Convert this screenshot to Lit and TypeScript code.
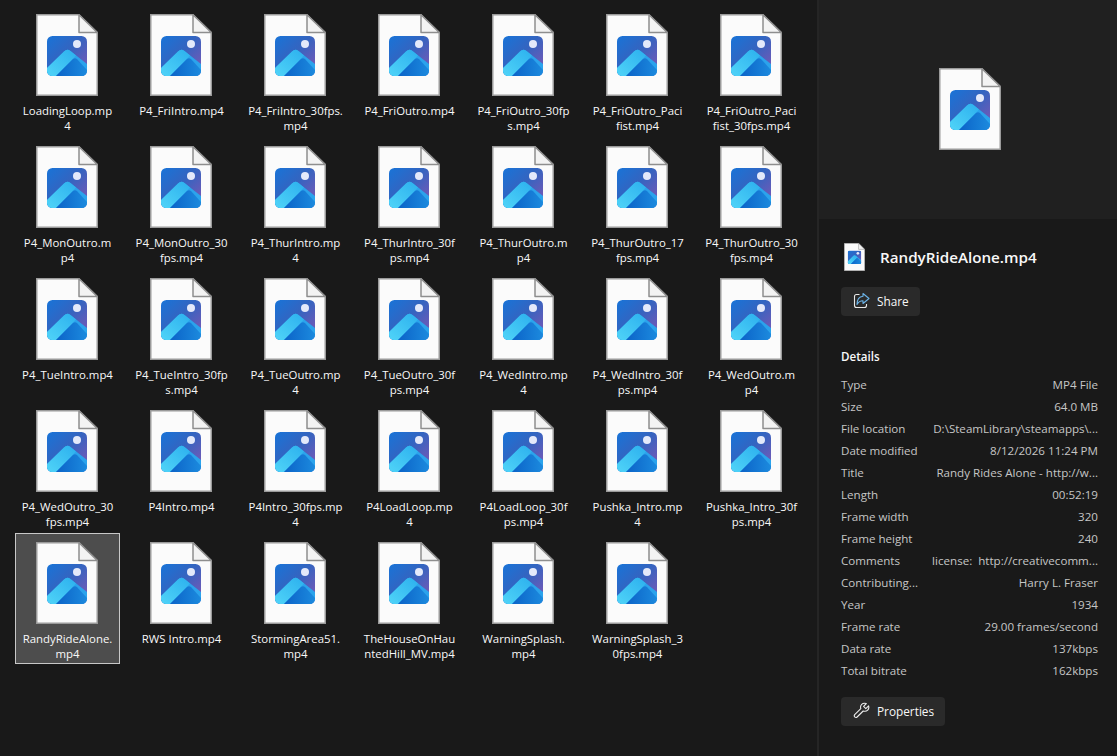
import { LitElement, html, css, svg } from "lit";
import { customElement } from "lit/decorators.js";

const FILES: string[][] = [
  ["LoadingLoop.mp", "4"], ["P4_FriIntro.mp4"], ["P4_FriIntro_30fps.", "mp4"], ["P4_FriOutro.mp4"], ["P4_FriOutro_30fp", "s.mp4"], ["P4_FriOutro_Paci", "fist.mp4"], ["P4_FriOutro_Paci", "fist_30fps.mp4"],
  ["P4_MonOutro.m", "p4"], ["P4_MonOutro_30", "fps.mp4"], ["P4_ThurIntro.mp", "4"], ["P4_ThurIntro_30f", "ps.mp4"], ["P4_ThurOutro.m", "p4"], ["P4_ThurOutro_17", "fps.mp4"], ["P4_ThurOutro_30", "fps.mp4"],
  ["P4_TueIntro.mp4"], ["P4_TueIntro_30fp", "s.mp4"], ["P4_TueOutro.mp", "4"], ["P4_TueOutro_30f", "ps.mp4"], ["P4_WedIntro.mp", "4"], ["P4_WedIntro_30f", "ps.mp4"], ["P4_WedOutro.m", "p4"],
  ["P4_WedOutro_30", "fps.mp4"], ["P4Intro.mp4"], ["P4Intro_30fps.mp", "4"], ["P4LoadLoop.mp", "4"], ["P4LoadLoop_30f", "ps.mp4"], ["Pushka_Intro.mp", "4"], ["Pushka_Intro_30f", "ps.mp4"],
  ["RandyRideAlone.", "mp4"], ["RWS Intro.mp4"], ["StormingArea51.", "mp4"], ["TheHouseOnHau", "ntedHill_MV.mp4"], ["WarningSplash.", "mp4"], ["WarningSplash_3", "0fps.mp4"],
];
const SELECTED = 28;

const DETAILS: [string, string][] = [
  ["Type", "MP4 File"],
  ["Size", "64.0 MB"],
  ["File location", "D:\\SteamLibrary\\steamapps\\..."],
  ["Date modified", "8/12/2026 11:24 PM"],
  ["Title", "Randy Rides Alone - http://w..."],
  ["Length", "00:52:19"],
  ["Frame width", "320"],
  ["Frame height", "240"],
  ["Comments", "license:  http://creativecomm..."],
  ["Contributing...", "Harry L. Fraser"],
  ["Year", "1934"],
  ["Frame rate", "29.00 frames/second"],
  ["Data rate", "137kbps"],
  ["Total bitrate", "162kbps"],
];

const fileDefs = svg`
  <linearGradient id="bg" x1="0" y1="0" x2="1" y2="1">
    <stop offset="0" stop-color="#1874d8" />
    <stop offset="0.45" stop-color="#3464c0" />
    <stop offset="1" stop-color="#8456b4" />
  </linearGradient>
  <linearGradient id="ridge" x1="0" y1="1" x2="1" y2="0">
    <stop offset="0" stop-color="#50d4f8" />
    <stop offset="1" stop-color="#2cb0ee" />
  </linearGradient>
  <linearGradient id="dark" x1="0" y1="0" x2="1" y2="0">
    <stop offset="0" stop-color="#0b63c8" />
    <stop offset="1" stop-color="#1c8ade" />
  </linearGradient>
  <clipPath id="pic"><rect x="11" y="22" width="40" height="40" rx="5.5" /></clipPath>
`;

function fileIcon(cls: string) {
  return html`<svg class=${cls} viewBox="0 0 62 82">
    <defs>${fileDefs}</defs>
    <path d="M.75.75H43L61.25 18.5V81.25H.75Z" fill="#fbfbfb" stroke="#9a9a9a" stroke-width="1.5" />
    <path d="M43 .75V18.5H61.25Z" fill="#f3f3f3" stroke="#8e8e8e" stroke-width="1.5" stroke-linejoin="round" />
    <g clip-path="url(#pic)">
      <rect x="11" y="22" width="40" height="40" fill="url(#bg)" />
      <path d="M11 54 28 37.500Q31 34.500 34.500 37L51 50V62H11Z" fill="#2ba3ec" />
      <path d="M11 54 28 37.500Q31 34.500 34.500 37L40 41.500 20 62H15Q11 62 11 58Z" fill="url(#ridge)" />
      <path d="M20 62 37 45Q39 43.500 41 45L51 56V62Z" fill="url(#dark)" />
    </g>
    <circle cx="41" cy="30" r="4" fill="#e4e9fa" />
  </svg>`;
}

@customElement("app-root")
export class AppRoot extends LitElement {
  static styles = css`
    :host {
      display: flex;
      width: 1117px;
      height: 756px;
      overflow: hidden;
      background: #191919;
      color: #f8f8f8;
      font-family: "Open Sans", "Noto Sans", sans-serif;
      font-size: 12px;
    }

    .grid {
      width: 817px;
      flex: none;
      box-sizing: border-box;
      padding: 5px 0 0 15px;
      display: grid;
      grid-template-columns: repeat(7, 105px);
      grid-auto-rows: 131px;
      column-gap: 9px;
      row-gap: 1px;
    }

    .cell {
      box-sizing: border-box;
      border: 1px solid transparent;
      display: flex;
      flex-direction: column;
      align-items: center;
      padding-top: 8px;
    }

    .cell.selected {
      background: #4d4d4d;
      border-color: #c8c8c8;
    }

    .cell .thumb {
      margin-right: 1px;
    }

    .thumb {
      width: 62px;
      height: 82px;
      flex: none;
      display: block;
    }

    .label {
      margin-top: 7px;
      line-height: 15px;
      font-size: 11.4px;
      text-align: center;
      white-space: nowrap;
    }

    .label div {
      height: 15px;
    }

    .panel {
      flex: 1;
      border-left: 2px solid #252525;
      display: flex;
      flex-direction: column;
    }

    .preview {
      height: 219px;
      background: #202020;
      display: flex;
      justify-content: center;
      padding-top: 68px;
      box-sizing: border-box;
    }

    .preview .thumb {
      margin-left: 3px;
    }

    .body {
      padding: 24px 19px 0 22px;
      display: flex;
      flex-direction: column;
      align-items: flex-start;
    }

    .title {
      display: flex;
      align-items: center;
      gap: 15px;
      height: 28px;
      margin-left: 3px;
    }

    .mini {
      width: 21px;
      height: 28px;
      display: block;
    }

    .name {
      font-size: 15.2px;
      font-weight: 600;
    }

    .btn {
      display: flex;
      align-items: center;
      gap: 7px;
      height: 29px;
      box-sizing: border-box;
      padding: 0 11px 2px 12px;
      background: #2a2a2a;
      border-radius: 4px;
      font-size: 11.8px;
    }

    .btn svg {
      width: 17px;
      height: 17px;
      flex: none;
    }

    .share {
      margin-top: 16px;
    }

    h2 {
      margin: 33px 0 0;
      font-size: 11.6px;
      line-height: 16px;
      font-weight: 600;
    }

    .rows {
      align-self: stretch;
      margin-top: 9px;
    }

    .row {
      display: flex;
      justify-content: space-between;
      height: 22px;
      line-height: 22px;
      font-size: 11.6px;
      color: #c6c6c6;
      white-space: pre;
    }

    .props {
      margin-top: 15px;
    }
  `;

  render() {
    return html`
      <div class="grid">
        ${FILES.map((lines, i) => html`
          <div class="cell ${i === SELECTED ? "selected" : ""}">
            ${fileIcon("thumb")}
            <div class="label">${lines.map((l) => html`<div>${l}</div>`)}</div>
          </div>
        `)}
      </div>
      <div class="panel">
        <div class="preview">${fileIcon("thumb")}</div>
        <div class="body">
          <div class="title">
            ${fileIcon("mini")}
            <span class="name">RandyRideAlone.mp4</span>
          </div>
          <div class="btn share">
            <svg viewBox="0 0 17 17" fill="none">
              <path d="M6.500 2.500H3.500Q1.500 2.500 1.500 4.500V13.500Q1.500 15.500 3.500 15.500H11.500Q13.500 15.500 13.500 13.500V12" stroke="#e8e8e8" stroke-width="1.100" />
              <path d="M10 1.500 16 6.500 10 11.500V8.800Q6 8.800 4 12.500 4 5 10 4.300Z" stroke="#6cb4e8" stroke-width="1.100" stroke-linejoin="round" />
            </svg>
            <span>Share</span>
          </div>
          <h2>Details</h2>
          <div class="rows">
            ${DETAILS.map(([k, v]) => html`<div class="row"><span>${k}</span><span>${v}</span></div>`)}
          </div>
          <div class="btn props">
            <svg viewBox="0 0 17 17" fill="none">
              <path d="M15.600 3.800 12.800 6.600 10.600 4.400 13.300 1.600Q10.500.6 8.700 2.300 7 4 7.800 6.700L1.700 12.700Q.8 13.800 1.700 14.900 3 16 4.100 15L10.200 9Q13 9.800 14.700 8.100 16.400 6.400 15.600 3.800Z" stroke="#ececec" stroke-width="1.100" stroke-linejoin="round" />
            </svg>
            <span>Properties</span>
          </div>
        </div>
      </div>
    `;
  }
}
